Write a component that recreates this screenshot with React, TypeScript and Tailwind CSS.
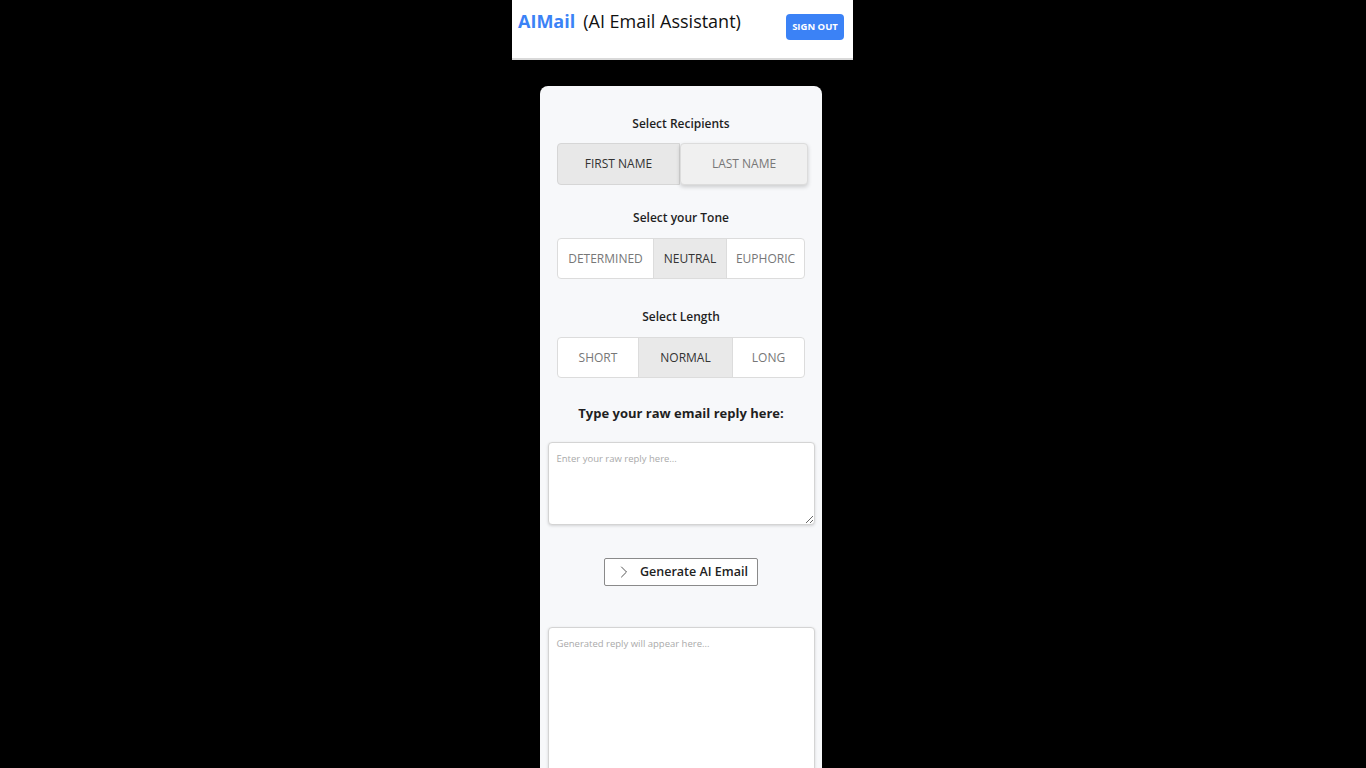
import { ChevronRight } from 'lucide-react';

const TONES = [
    { label: 'DETERMINED', w: 'w-[95px]', active: false },
    { label: 'NEUTRAL', w: 'w-[73px]', active: true },
    { label: 'EUPHORIC', w: 'flex-1', active: false },
];

const LENGTHS = [
    { label: 'SHORT', w: 'w-[80px]', active: false },
    { label: 'NORMAL', w: 'w-[94px]', active: true },
    { label: 'LONG', w: 'flex-1', active: false },
];

function Segmented({ items }: { items: { label: string; w: string; active: boolean }[] }) {
    return (
        <div className="flex shrink-0 w-[248px] h-[41px] rounded-[4px] border border-[#dcdcdc] bg-white overflow-hidden">
            {items.map((item, i) => (
                <div
                    key={item.label}
                    className={`${item.w} flex items-center justify-center text-[12px] ${i > 0 ? 'border-l border-[#dcdcdc]' : ''} ${item.active ? 'bg-[#e9e9e9] text-[#333]' : 'text-[#777]'}`}
                >
                    {item.label}
                </div>
            ))}
        </div>
    );
}

export default function App() {
    return (
        <div className="h-[768px] overflow-hidden bg-black" style={{ fontFamily: '"Open Sans", "Noto Sans", sans-serif' }}>
            <div className="w-[341px] ml-[512px] flex flex-col">
                {/* Header */}
                <div className="h-[58px] bg-white flex items-start justify-between pl-[6px] pr-[9px] pt-[8px]">
                    <div className="flex items-baseline gap-[8px]">
                        <span className="text-[18px] font-bold text-[#3b82f6]">AIMail</span>
                        <span className="text-[18px] text-[#111]">(AI Email Assistant)</span>
                    </div>
                    <button className="mt-[6px] w-[58px] h-[26px] rounded-[4px] bg-[#3b82f6] text-white text-[9.5px] font-bold">
                        SIGN OUT
                    </button>
                </div>
                <div className="h-[2px] bg-[#d9d9d9]" />

                {/* Main */}
                <div className="bg-black rounded-t-[8px] pt-[26px] pl-[28px]">
                    <div className="w-[282px] bg-[#f7f8fa] rounded-[8px] pt-[29px] px-[8px] flex flex-col items-center">
                        <h2 className="text-[12px] font-semibold text-[#1f1f1f] leading-[18px]">Select Recipients</h2>
                        <div className="flex shrink-0 w-[251px] h-[42px] mt-[10px] ml-[3px]">
                            <div className="w-[123px] flex items-center justify-center rounded-l-[4px] border border-[#d6d6d6] bg-[#e8e8e8] text-[12px] text-[#333]">
                                FIRST NAME
                            </div>
                            <div className="flex-1 flex items-center justify-center rounded-[4px] border border-[#dcdcdc] bg-[#f0f0f0] text-[12px] text-[#777] shadow-[0_2px_4px_rgba(0,0,0,0.18)]">
                                LAST NAME
                            </div>
                        </div>

                        <h2 className="mt-[24px] text-[12px] font-semibold text-[#1f1f1f] leading-[18px]">Select your Tone</h2>
                        <div className="mt-[11px]">
                            <Segmented items={TONES} />
                        </div>

                        <h2 className="mt-[29px] text-[12px] font-semibold text-[#1f1f1f] leading-[18px]">Select Length</h2>
                        <div className="mt-[11px]">
                            <Segmented items={LENGTHS} />
                        </div>

                        <h2 className="mt-[25px] text-[13px] font-bold text-[#1f1f1f] leading-[20px]">Type your raw email reply here:</h2>
                        <textarea
                            placeholder="Enter your raw reply here..."
                            className="shrink-0 mt-[19px] w-[267px] h-[83px] rounded-[4px] border border-[#d4d4d4] bg-white px-[8px] py-[9px] text-[9.5px] shadow-[0_1px_3px_rgba(0,0,0,0.15)] placeholder:text-[#aaa] outline-none"
                        />

                        <button className="shrink-0 mt-[33px] w-[154px] h-[28px] border border-[#8a8a8a] rounded-[2px] bg-white flex items-center justify-center gap-[6px] text-[12.5px] font-semibold text-[#222]">
                            <ChevronRight className="w-[20px] h-[20px] text-[#444]" strokeWidth={1.1} />
                            Generate AI Email
                        </button>

                        <textarea
                            placeholder="Generated reply will appear here..."
                            className="shrink-0 mt-[41px] w-[267px] h-[200px] rounded-[4px] border border-[#d4d4d4] bg-white px-[8px] py-[9px] text-[9.5px] shadow-[0_1px_3px_rgba(0,0,0,0.15)] placeholder:text-[#aaa] outline-none resize-none"
                        />
                    </div>
                </div>
            </div>
        </div>
    );
}
